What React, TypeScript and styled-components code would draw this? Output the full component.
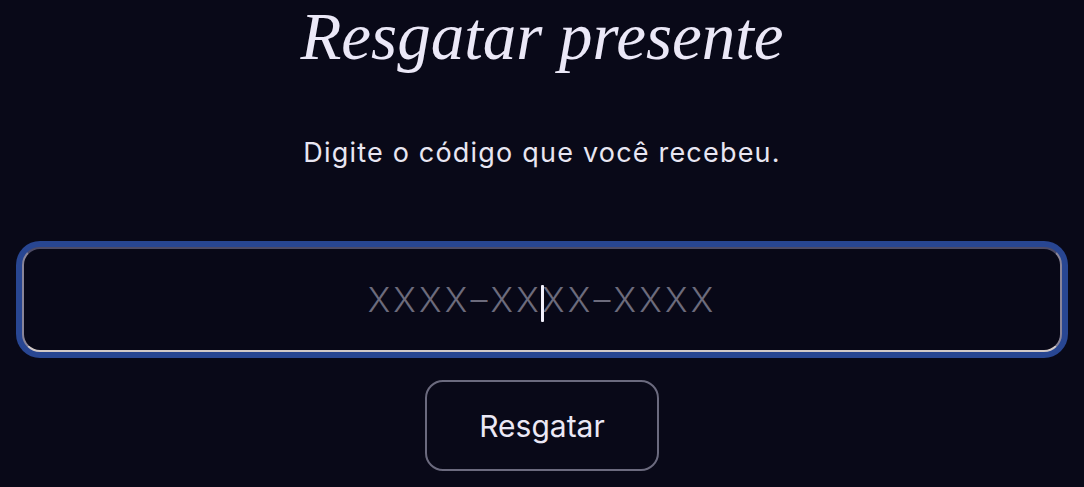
import React from "react";
import styled, { createGlobalStyle } from "styled-components";

const Global = createGlobalStyle`
  html, body { margin: 0; padding: 0; background: #090918; }
  body { font-family: "Inter", "Noto Sans", sans-serif; }
  * { box-sizing: border-box; }
`;

const Page = styled.main`
  width: 1084px;
  height: 487px;
  overflow: hidden;
  background: #090918;
  display: flex;
  flex-direction: column;
  align-items: center;
`;

const Title = styled.h1`
  margin: 0;
  font-family: "Liberation Serif", serif;
  font-style: italic;
  font-weight: 400;
  font-size: 67px;
  line-height: 73px;
  color: #ebe8f7;
`;

const Subtitle = styled.p`
  margin: 64px 0 0;
  font-family: "Inter", "Noto Sans", sans-serif;
  font-size: 27px;
  line-height: 32px;
  letter-spacing: 1.2px;
  color: #e8e6f2;
`;

const FieldWrap = styled.div`
  position: relative;
  margin-top: 78px;
  width: 1040px;
`;

const CodeInput = styled.input`
  display: block;
  width: 100%;
  height: 105px;
  border-radius: 18px;
  border: 2px solid;
  border-color: #4d4b66 #8a8598 #d2c9c8 #8a8598;
  box-shadow: 0 0 0 6px #284692;
  background: #080817;
  outline: none;
  text-align: center;
  font-family: "Inter", "Noto Sans", sans-serif;
  font-size: 34px;
  font-weight: 300;
  letter-spacing: 3.2px;
  color: #e8e6f2;
  &::placeholder {
    color: #6c6b7c;
  }
`;

const Caret = styled.span`
  position: absolute;
  left: 519px;
  top: 38px;
  width: 3px;
  height: 37px;
  background: #f2f0fb;
  border-radius: 1px;
`;

const Button = styled.button`
  margin-top: 28px;
  width: 234px;
  height: 91px;
  border-radius: 18px;
  border: 2px solid #6b6a7e;
  background: transparent;
  font-family: "Inter", "Noto Sans", sans-serif;
  font-size: 30px;
  color: #ebe8f5;
  cursor: pointer;
`;

export default function App() {
  return (
    <>
      <Global />
      <Page>
        <Title>Resgatar presente</Title>
        <Subtitle>Digite o código que você recebeu.</Subtitle>
        <FieldWrap>
          <CodeInput placeholder="XXXX–XXXX–XXXX" />
          <Caret />
        </FieldWrap>
        <Button>Resgatar</Button>
      </Page>
    </>
  );
}
